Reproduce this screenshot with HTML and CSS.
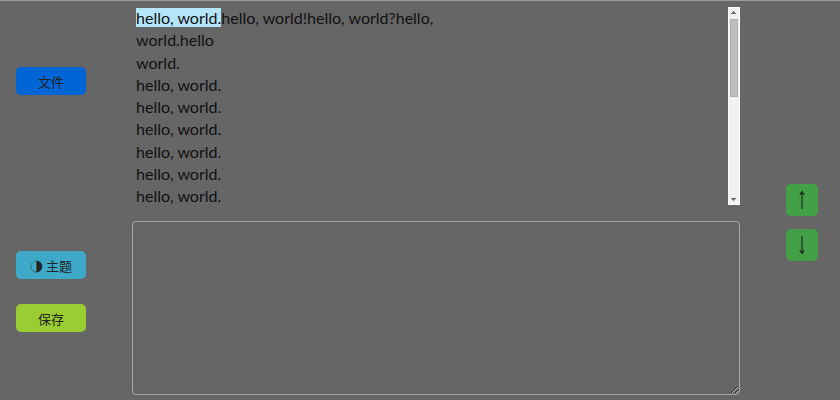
FILE: index.html
```html
<!DOCTYPE html>
<html lang="zh">
<head>
<meta charset="utf-8">
<title>Editor</title>
<link rel="stylesheet" href="styles.css">
</head>
<body>
<div class="page">
  <div class="side">
    <button class="btn btn-file">文件</button>
    <button class="btn btn-theme">◑ 主题</button>
    <button class="btn btn-save">保存</button>
  </div>
  <div class="main">
    <div class="viewer">
      <div class="lines">
        <div><span class="hl">hello, world.</span>hello, world!hello, world?hello,</div>
        <div>world.hello</div>
        <div>world.</div>
        <div>hello, world.</div>
        <div>hello, world.</div>
        <div>hello, world.</div>
        <div>hello, world.</div>
        <div>hello, world.</div>
        <div>hello, world.</div>
      </div>
      <div class="scrollbar">
        <div class="sb-btn sb-up"></div>
        <div class="sb-track"><div class="sb-thumb"></div></div>
        <div class="sb-btn sb-down"></div>
      </div>
    </div>
    <textarea class="input"></textarea>
  </div>
  <div class="nav">
    <button class="arrow" aria-label="up">
      <svg width="32" height="32" viewBox="0 0 32 32"><path d="M16 7.5 V25 M13.8 10.8 L16 7.5 L18.2 10.8" fill="none" stroke="#1e2a1e" stroke-width="1.2"/></svg>
    </button>
    <button class="arrow" aria-label="down">
      <svg width="32" height="32" viewBox="0 0 32 32"><path d="M16 7 V24.5 M13.8 21.2 L16 24.5 L18.2 21.2" fill="none" stroke="#1e2a1e" stroke-width="1.2"/></svg>
    </button>
  </div>
</div>
</body>
</html>
```
FILE: styles.css
```css
html, body {
  margin: 0;
  padding: 0;
  height: 100%;
}
body {
  background: #666666;
  border-top: 1px solid #9a9a9a;
  box-sizing: border-box;
  font-family: "Noto Sans CJK SC", "Noto Sans", sans-serif;
  overflow: hidden;
}
.page {
  display: flex;
  height: 399px;
}
.side {
  width: 132px;
  display: flex;
  flex-direction: column;
  align-items: flex-start;
  padding-left: 16px;
  box-sizing: border-box;
}
.btn {
  width: 70px;
  height: 28px;
  border: none;
  border-radius: 5px;
  font-family: "Noto Sans CJK SC", sans-serif;
  font-size: 13px;
  color: #222;
  padding: 0;
}
.btn-file { background: #0066d6; margin-top: 66px; }
.btn-theme { background: #3fa9c9; margin-top: 156px; }
.btn-save { background: #9acd32; margin-top: 25px; }
.main {
  width: 608px;
  display: flex;
  flex-direction: column;
  gap: 16px;
  padding-top: 6px;
}
.viewer {
  height: 198px;
  display: flex;
}
.lines {
  flex: 1;
  overflow: hidden;
  font-family: "Lato", sans-serif;
  font-size: 16px;
  line-height: 22.3px;
  color: #111;
  padding-left: 4px;
}
.scrollbar {
  width: 12px;
  display: flex;
  flex-direction: column;
  background: #f1f1f1;
  border: 1px solid #fafafa;
  box-sizing: border-box;
}
.sb-btn {
  height: 10px;
  flex: none;
}
.sb-up {
  background:
    linear-gradient(#707070, #707070) 4px 3px / 1px 1px no-repeat,
    linear-gradient(#707070, #707070) 3px 4px / 3px 1px no-repeat,
    linear-gradient(#707070, #707070) 2px 5px / 5px 1px no-repeat;
}
.sb-down {
  background:
    linear-gradient(#707070, #707070) 2px 4px / 5px 1px no-repeat,
    linear-gradient(#707070, #707070) 3px 5px / 3px 1px no-repeat,
    linear-gradient(#707070, #707070) 4px 6px / 1px 1px no-repeat;
}
.sb-track {
  flex: 1;
  padding: 1px 1px;
}
.sb-thumb {
  height: 78px;
  background: #bdbdbd;
  border: 1px solid #b0b0b0;
  box-sizing: border-box;
}
.hl { background: #b5e5f8; }
.input {
  height: 174px;
  background: transparent;
  border: 1px solid #a6a6a6;
  border-radius: 4px;
  box-sizing: border-box;
  resize: both;
  margin: 0;
  padding: 4px;
  width: 608px;
}
.nav {
  display: flex;
  flex-direction: column;
  gap: 13px;
  padding-top: 183px;
  padding-left: 46px;
}
.arrow {
  width: 32px;
  height: 32px;
  border: none;
  border-radius: 5px;
  background: #43a046;
  padding: 0;
  display: flex;
}
```
